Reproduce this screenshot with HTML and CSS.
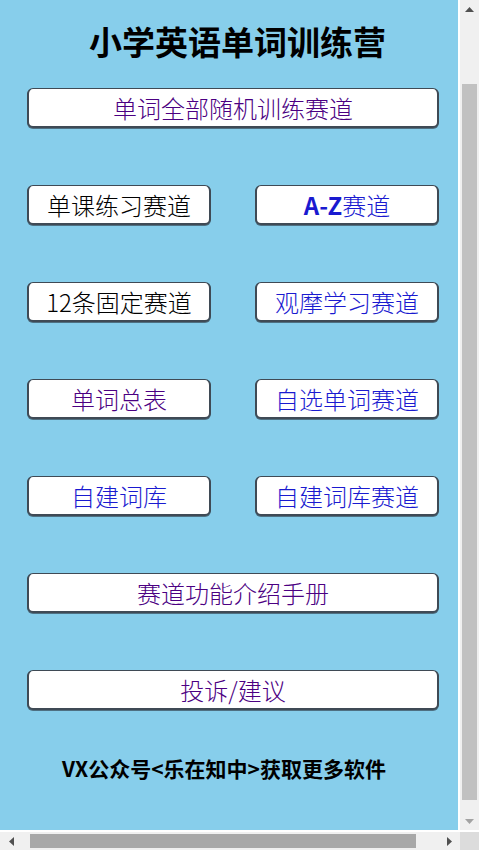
FILE: index.html
```html
<!DOCTYPE html>
<html>
<head>
  <meta charset="utf-8">
  <link rel="stylesheet" href="styles.css">
</head>
<body>
  <div class="window">
    <div class="top-row">
      <div class="page">
        <h1 class="title">小学英语单词训练营</h1>

        <div class="menu">
          <button class="track-btn wide purple">单词全部随机训练赛道</button>

          <div class="btn-row">
            <button class="track-btn black">单课练习赛道</button>
            <button class="track-btn blue"><b>A-Z</b>赛道</button>
          </div>

          <div class="btn-row">
            <button class="track-btn black">12条固定赛道</button>
            <button class="track-btn blue">观摩学习赛道</button>
          </div>

          <div class="btn-row">
            <button class="track-btn purple">单词总表</button>
            <button class="track-btn blue">自选单词赛道</button>
          </div>

          <div class="btn-row">
            <button class="track-btn blue">自建词库</button>
            <button class="track-btn blue">自建词库赛道</button>
          </div>

          <button class="track-btn wide purple">赛道功能介绍手册</button>

          <button class="track-btn wide purple">投诉/建议</button>
        </div>

        <div class="footer">VX公众号&lt;乐在知中&gt;获取更多软件</div>
      </div>

      <div class="vscroll">
        <div class="arrow">
          <svg width="9" height="5" viewBox="0 0 9 5"><polygon points="0,5 4.5,0 9,5" fill="#505050"/></svg>
        </div>
        <div class="vtrack"><div class="vthumb"></div></div>
        <div class="arrow">
          <svg width="9" height="5" viewBox="0 0 9 5"><polygon points="0,0 4.5,5 9,0" fill="#a3a3a3"/></svg>
        </div>
      </div>
    </div>

    <div class="hscroll">
      <div class="harrow">
        <svg width="5" height="9" viewBox="0 0 5 9"><polygon points="5,0 0,4.5 5,9" fill="#505050"/></svg>
      </div>
      <div class="htrack"><div class="hthumb"></div></div>
      <div class="harrow">
        <svg width="5" height="9" viewBox="0 0 5 9"><polygon points="0,0 5,4.5 0,9" fill="#505050"/></svg>
      </div>
      <div class="corner"></div>
    </div>
  </div>
</body>
</html>
```

FILE: styles.css
```css
body {
  margin: 0;
  padding: 0;
  background: #ffffff;
  font-family: "Noto Sans CJK SC", "Noto Sans", sans-serif;
  overflow: hidden;
}

.window {
  width: 479px;
  height: 850px;
  display: flex;
  flex-direction: column;
  background: #ffffff;
}

.top-row {
  display: flex;
  height: 830px;
}

.page {
  width: 458px;
  height: 830px;
  background: #87ceeb;
  box-sizing: border-box;
  padding-left: 27px;
  overflow: hidden;
}

.title {
  margin: 0;
  width: 412px;
  height: 82px;
  line-height: 82px;
  padding-left: 9px;
  box-sizing: border-box;
  text-align: center;
  font-size: 33px;
  font-weight: 700;
  color: #000000;
  margin-bottom: 6px;
}

.menu {
  width: 412px;
  display: flex;
  flex-direction: column;
  gap: 57px;
}

.btn-row {
  display: flex;
  justify-content: space-between;
}

.track-btn {
  width: 184px;
  height: 40px;
  padding: 0;
  background: #ffffff;
  border: 2px solid #3f4a55;
  border-top-width: 1.5px;
  border-radius: 6px;
  box-shadow: 0 1px 0 rgba(40, 50, 60, 0.6);
  font-family: "Noto Sans CJK SC", "Noto Sans", sans-serif;
  font-size: 24px;
  font-weight: 300;
  line-height: 36px;
  cursor: pointer;
  box-sizing: border-box;
}

.track-btn.wide {
  width: 412px;
}

.track-btn b {
  font-weight: 700;
}

.purple {
  color: #4b0082;
}

.blue {
  color: #1a1ad0;
}

.black {
  color: #000000;
}

.footer {
  margin-top: 40px;
  padding-left: 35px;
  line-height: 36px;
  font-size: 21px;
  font-weight: 700;
  color: #000000;
  white-space: nowrap;
}

/* fake scrollbars */
.vscroll {
  width: 19px;
  margin-left: 2px;
  background: #f0f0f0;
  display: flex;
  flex-direction: column;
}

.arrow {
  height: 18px;
  display: flex;
  align-items: center;
  justify-content: center;
}

.vtrack {
  flex: 1;
  display: flex;
  flex-direction: column;
  padding: 66px 2px 12px 2px;
}

.vthumb {
  flex: 1;
  background: #c1c1c1;
}

.hscroll {
  height: 18px;
  margin-top: 2px;
  display: flex;
  background: #f0f0f0;
}

.harrow {
  width: 22px;
  display: flex;
  align-items: center;
  justify-content: center;
}

.htrack {
  width: 416px;
  display: flex;
  padding: 2px 22px 2px 8px;
  box-sizing: border-box;
}

.hthumb {
  flex: 1;
  background: #a8a8a8;
}

.corner {
  flex: 1;
  background: #dcdcdc;
}
```
